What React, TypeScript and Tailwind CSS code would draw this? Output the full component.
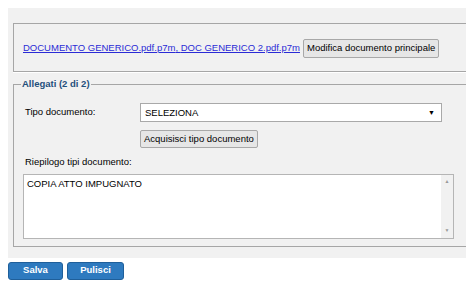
export default function App() {
  return (
    <div className="pt-2 px-2 bg-white min-h-[287px] font-['Liberation_Sans',Arial,sans-serif] text-[9.5px] text-black">
      <div className="w-[458px] bg-[#f1f1f1] pt-[15px] pb-[11px] pl-[5px]">
        <div className="h-[49px] border-t border-l border-b border-[#a6a6a6] shadow-[0_1px_0_#fff] flex items-center pl-[9px] pt-[1px]">
          <a href="#" className="text-[#2b2bd6] underline">DOCUMENTO GENERICO.pdf.p7m</a>
          <span className="text-[#2b2bd6] underline whitespace-pre">, </span>
          <a href="#" className="text-[#2b2bd6] underline">DOC GENERICO 2.pdf.p7m</a>
          <button className="ml-[3px] h-[19px] px-[3px] bg-[#e6e6e6] border border-[#a8a8a8] rounded-[2px] text-[9.5px]">
            Modifica documento principale
          </button>
        </div>
        <fieldset className="mt-[5px] border-t border-l border-b border-[#a6a6a6] pl-[11px] pb-[7px] pr-[12px]">
          <legend className="ml-[-4px] px-[1px] font-bold text-[#1f4f7c]">Allegati (2 di 2)</legend>
          <div className="flex items-start mt-[12px]">
            <span className="w-[115px] pt-[2px]">Tipo documento:</span>
            <div className="w-[302px] h-[19px] bg-white border border-[#a9a9a9] flex items-center justify-between pl-[4px] pr-[6px]">
              <span>SELEZIONA</span>
              <span className="text-[7px]">▼</span>
            </div>
          </div>
          <div className="pl-[115px] mt-[8px]">
            <button className="h-[18px] px-[3px] bg-[#e6e6e6] border border-[#a8a8a8] rounded-[2px] text-[9.5px]">
              Acquisisci tipo documento
            </button>
          </div>
          <div className="mt-[7px]">Riepilogo tipi documento:</div>
          <div className="ml-[-2px] mt-[4px] w-[431px] h-[65px] bg-white border border-[#b5b5b5] flex">
            <div className="flex-1 pl-[3px] pt-[2px]">COPIA ATTO IMPUGNATO</div>
            <div className="w-[12px] bg-[#f1f1f1] flex flex-col justify-between items-center text-[#999] text-[5px] py-[3px]">
              <span>▲</span>
              <span>▼</span>
            </div>
          </div>
        </fieldset>
      </div>
      <div className="flex gap-[4px] mt-[4px]">
        <button className="w-[55px] h-[18px] bg-[#2e7abf] border border-[#1f5f9a] rounded-[3px] text-white font-bold text-[9.5px]">
          Salva
        </button>
        <button className="w-[57px] h-[18px] bg-[#2e7abf] border border-[#1f5f9a] rounded-[3px] text-white font-bold text-[9.5px]">
          Pulisci
        </button>
      </div>
    </div>
  );
}
